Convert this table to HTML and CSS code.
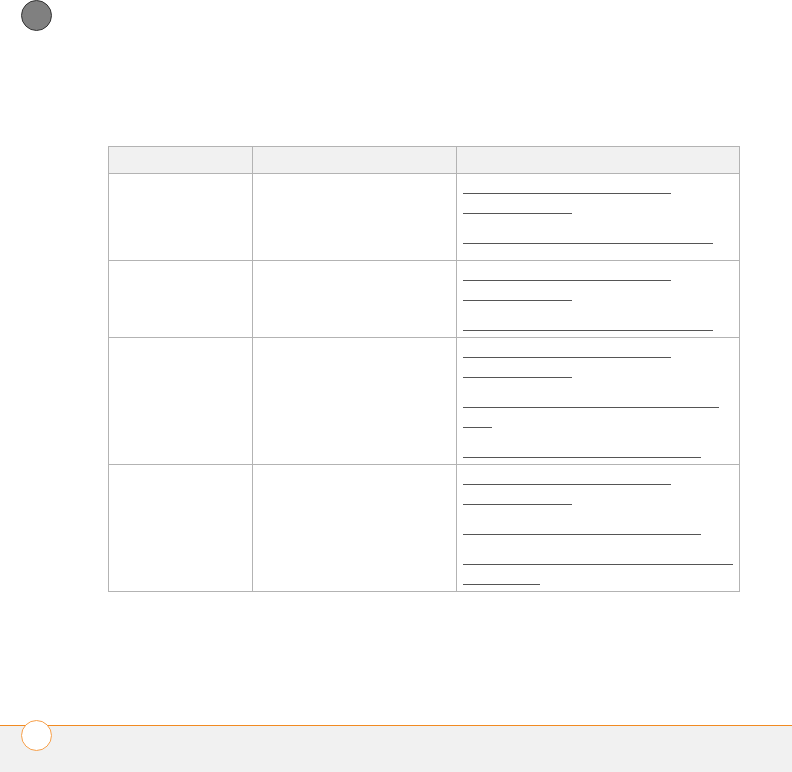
FILE: index.html
```html
<!DOCTYPE html>
<html lang="en">
<head>
    <meta charset="UTF-8">
    <meta name="viewport" content="width=device-width, initial-scale=1.0">
    <title>Reference table</title>
    <link rel="stylesheet" href="styles.css">
</head>
<body>
    <div class="top">
        <div class="chapter-badge"></div>
    </div>

    <div class="content">
        <div class="ref-table">
            <div class="cell head"></div>
            <div class="cell head"></div>
            <div class="cell head"></div>

            <div class="cell"></div>
            <div class="cell"></div>
            <div class="cell links first-row">
                <span class="ln w-208"></span>
                <span class="ln w-109"></span>
                <span class="ln w-250 gap"></span>
            </div>

            <div class="cell"></div>
            <div class="cell"></div>
            <div class="cell links">
                <span class="ln w-208"></span>
                <span class="ln w-109"></span>
                <span class="ln w-250 gap"></span>
            </div>

            <div class="cell"></div>
            <div class="cell"></div>
            <div class="cell links">
                <span class="ln w-208"></span>
                <span class="ln w-109"></span>
                <span class="ln w-256 gap"></span>
                <span class="ln w-29"></span>
                <span class="ln w-238 gap"></span>
            </div>

            <div class="cell"></div>
            <div class="cell"></div>
            <div class="cell links">
                <span class="ln w-208"></span>
                <span class="ln w-109"></span>
                <span class="ln w-238 gap"></span>
                <span class="ln w-270 gap"></span>
                <span class="ln w-77"></span>
            </div>
        </div>
    </div>

    <div class="footer">
        <div class="page-badge"></div>
    </div>
</body>
</html>
```

FILE: styles.css
```css
* {
    box-sizing: border-box;
}
body {
    margin: 0;
    height: 772px;
    display: flex;
    flex-direction: column;
    background: #fff;
    font-family: "Liberation Sans", Arial, sans-serif;
    color: #333;
}
.top {
    padding-left: 21px;
}
.chapter-badge {
    width: 31px;
    height: 31px;
    border: 1px solid #333;
    border-radius: 50%;
    background: #808080;
}
.content {
    padding: 115px 0 0 108px;
}
.ref-table {
    display: grid;
    grid-template-columns: 143px 203px 282px;
    gap: 1px;
    padding: 1px;
    width: max-content;
    background: #b3b3b3;
}
.cell {
    background: #fff;
    padding: 0 6px;
}
.cell.head {
    background: #f1f1f1;
    height: 26px;
}
.links {
    padding-bottom: 6px;
}
.links.first-row {
    padding-bottom: 16px;
}
.ln {
    display: block;
    height: 20px;
    border-bottom: 1px solid #555;
}
.ln.gap {
    margin-top: 10px;
}
.w-29 { width: 29px; }
.w-77 { width: 77px; }
.w-109 { width: 109px; }
.w-208 { width: 208px; }
.w-238 { width: 238px; }
.w-250 { width: 250px; }
.w-256 { width: 256px; }
.w-270 { width: 270px; }
.footer {
    margin-top: auto;
    height: 47px;
    border-top: 1px solid #f18a21;
    background: #f1f1f1;
    padding-left: 21px;
}
.page-badge {
    width: 31px;
    height: 31px;
    margin-top: -6px;
    border: 1px solid #f7a04a;
    border-radius: 50%;
    background: #fff;
}
```
